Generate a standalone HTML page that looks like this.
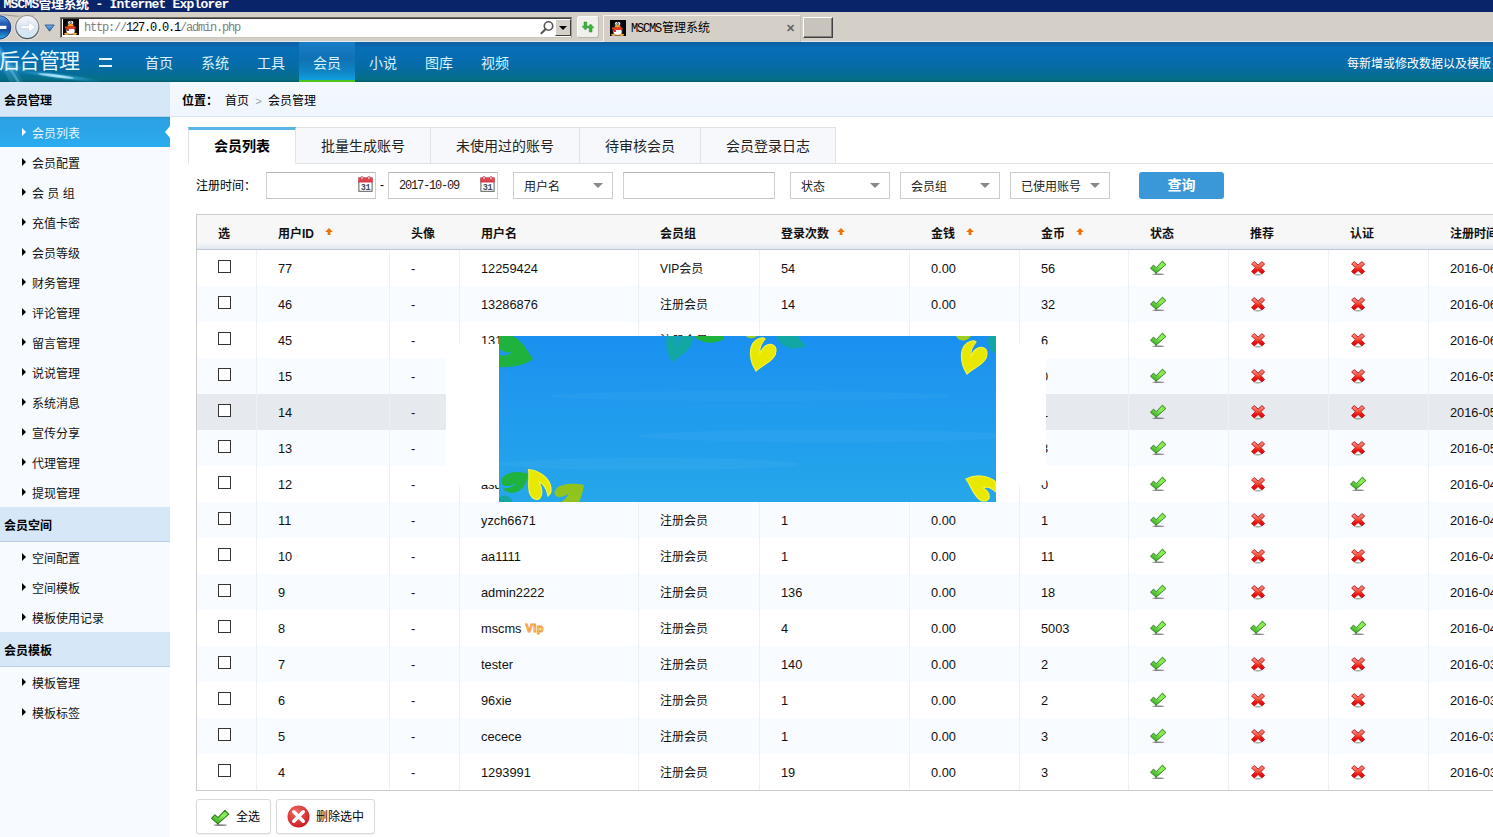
<!DOCTYPE html>
<html lang="zh-CN">
<head>
<meta charset="utf-8">
<title>MSCMS管理系统</title>
<style>
*{box-sizing:border-box;margin:0;padding:0}
html,body{width:1493px;height:837px;overflow:hidden;background:#fff}
body{position:relative;font-family:"Liberation Sans","Noto Sans CJK SC",sans-serif;font-size:12px;color:#000;line-height:1}
.abs{position:absolute}
/* ---------- browser chrome ---------- */
.titlebar{position:absolute;left:0;top:0;width:1493px;height:12px;background:#0a246a;overflow:hidden}
.titlebar span{position:absolute;left:3.5px;top:-3px;color:#fff;font:bold 13px/16px "Liberation Mono","Noto Sans CJK SC",monospace;white-space:nowrap;letter-spacing:-.5px}
.toolbar{position:absolute;left:0;top:12px;width:1493px;height:30px;background:#d4d0c8;border-bottom:1px solid #e4eaf0}
.addr{position:absolute;left:60px;top:5px;width:512px;height:21px;background:#fff;border:1px solid #716f64;border-right-color:#9d9a8f;border-bottom-color:#c9c6ba;box-shadow:inset 1px 1px 0 #404040}
.addr .url{position:absolute;left:23px;top:3px;font:12px/14px "Liberation Mono",monospace;color:#808080;white-space:nowrap;letter-spacing:-1.2px}
.addr .url b{font-weight:normal;color:#000}
.btab{position:absolute;left:603px;top:3px;width:198px;height:27px;background:#d4d0c8;border-left:1px solid #f4f3ef;border-top:1px solid #f4f3ef;border-right:1px solid #c4c0b8}
.btab .tt{position:absolute;left:27px;top:6px;font:12px/14px "Liberation Mono","Noto Sans CJK SC",monospace;white-space:nowrap;color:#000}
.btab .x{position:absolute;left:182px;top:5px;font:bold 11px/14px "Liberation Sans",sans-serif;color:#666}
.newtab{position:absolute;left:803px;top:5px;width:30px;height:21px;background:#c8c3bb;border:1px solid #fff;border-right-color:#404040;border-bottom-color:#404040;box-shadow:inset -1px -1px 0 #808080}
/* ---------- header ---------- */
.hdr{position:absolute;left:0;top:42px;width:1493px;height:40px;background:linear-gradient(#0e5fa2 0%,#0c63a8 6%,#066fb7 14%,#066cad 50%,#056c9b 75%,#057087 93%,#055c70 100%);overflow:hidden}
.logo{position:absolute;left:-1px;top:7px;font-size:21px;line-height:24px;color:#e4f6ff;font-weight:400;white-space:nowrap;letter-spacing:-1px}
.ham{position:absolute;left:99px;top:16px;width:13px;height:9px;border-top:2px solid #e6f6ff;border-bottom:2px solid #e6f6ff}
.nav{position:absolute;top:0;height:40px;width:56px;text-align:center;font-size:14px;line-height:43px;color:#d9f3ff}
.nav.on{background:linear-gradient(#1b7dc6 0%,#1072b4 45%,#0f86c6 80%,#10a0e0 100%);border-bottom:2px solid #4ec31c}
.notice{position:absolute;left:1347px;top:0;line-height:45px;font-size:12px;color:#fff;white-space:nowrap}
/* ---------- sidebar ---------- */
.side{position:absolute;left:0;top:82px;width:170px;height:755px;background:#f7fbff}
.sh{position:absolute;left:0;width:170px;height:35px;background:#d6e7f7;border-bottom:1px solid #b9cfe6;font-weight:bold;font-size:12px;line-height:38px;padding-left:4px;color:#000}
.si{position:absolute;left:0;width:170px;height:30px;font-size:12px;line-height:34px;padding-left:32px;color:#111}
.si:before{content:"";position:absolute;left:21.5px;top:10.5px;border-left:4.5px solid #000;border-top:4px solid transparent;border-bottom:4px solid transparent}
.si.on{background:linear-gradient(#2c94d4 0,#2ba2e4 8%,#2aa6e9 55%,#29adf0 100%);color:#e8f7ff}
.si.on:before{border-left-color:#fff}
.si.on:after{content:"";position:absolute;right:0;top:8.5px;border-right:5.5px solid #fff;border-top:6px solid transparent;border-bottom:6px solid transparent}
/* ---------- main ---------- */
.main{position:absolute;left:170px;top:82px;width:1323px;height:755px;background:#fff;overflow:hidden}
.crumb{position:absolute;left:0;top:0;width:1323px;height:35px;background:linear-gradient(#f4f9fe,#eff6fd);border-bottom:1px solid #dde5ec;font-size:12px;line-height:38px;padding-left:12px;white-space:nowrap}
.crumb b{font-weight:bold}
.crumb .c1{margin-left:7px}
.crumb .sep{display:inline-block;width:19px;text-align:center;color:#9aa;font-family:"Liberation Mono",monospace;font-size:11px}
.tabs{position:absolute;left:18px;top:45px;width:1305px;height:37px;border-bottom:1px solid #dfe3e8}
.tab{position:absolute;top:0;height:37px;border:1px solid #dfe3e8;border-left:none;background:#f6f8fb;font-size:14px;line-height:36px;text-align:center;color:#222}
.tab.on{background:#fff;border-top:3px solid #5ab3e6;border-left:1px solid #dfe3e8;border-bottom-color:#fff;font-weight:bold;line-height:32px;color:#000}
.filter{position:absolute;left:0;top:90px;width:1323px;height:27px;font-size:12px}
.filter .lbl{position:absolute;left:26px;top:0;line-height:28px}
.filter .dash{position:absolute;left:210px;top:0;line-height:26px}
.inp{position:absolute;top:0;height:27px;background:#fff;border:1px solid #cdd0d4;border-top-color:#b6b9bd;border-bottom-color:#c2c5c9}
.inp .cal{position:absolute;right:2px;top:3px}
.inp .dt{position:absolute;left:10px;top:0;line-height:26px;font-family:"Liberation Mono",monospace;font-size:12px;letter-spacing:-1.2px;color:#222}
.sel{position:absolute;top:0;height:27px;background:#fff;border:1px solid #c9cdd2;line-height:28px;padding-left:10px;color:#222}
.sel i{position:absolute;right:9px;top:10px;border-top:5px solid #888;border-left:5px solid transparent;border-right:5px solid transparent}
.btn-q{position:absolute;left:969px;top:0;width:85px;height:27px;border-radius:3px;background:#3a98d8;color:#fff;font-size:14px;font-weight:bold;line-height:26px;text-align:center}
/* table */
.tbl{position:absolute;left:26px;top:132px;width:1400px;height:577px;border:1px solid #ccc;border-right:none;background:#fff}
.th-row{position:absolute;left:0;top:0;width:1400px;height:35px;background:linear-gradient(#f7f7f7 0,#f7f7f7 78%,#eef2f6 88%,#e2e8ef 100%);border-bottom:1px solid #bfc8d2}
.th{position:absolute;top:0;height:34px;line-height:38px;font-weight:bold;padding-left:22px;white-space:nowrap;color:#111}
.th .up{margin-left:11px;vertical-align:2px}
.tr{position:absolute;left:0;width:1400px;height:36px;background:#fff}
.tr.alt{background:#f8fbff}
.tr.hov{background:#e6e9ee}
.td{position:absolute;top:0;height:36px;line-height:38px;padding-left:21px;border-left:1px solid #edf0f5;font-size:12.8px;white-space:nowrap;color:#111}
.td.c0{border-left:none}
.td.cg{font-size:12px}
.cb{position:absolute;left:22px;top:10px;width:13px;height:13px;border:1px solid #333;background:#fff}
.ic{position:absolute}
.vip{font:bold 11px "Liberation Sans",sans-serif;color:#fff;-webkit-text-stroke:1px #f29a2e;margin-left:4px;position:relative;top:-1px;letter-spacing:.5px}
.btn{position:absolute;top:717px;height:35px;border:1px solid #d9d9d9;border-radius:3px;background:#fff;font-size:12px;line-height:34px;box-shadow:0 1px 1px rgba(0,0,0,.06)}
.btn svg{position:absolute}
.btn span{position:absolute;white-space:nowrap}
.b1{left:26px;width:75px}
.b1 svg{left:14px;top:9px}
.b1 span{left:39px;top:0}
.b2{left:106px;width:99px}
.b2 svg{left:10px;top:5px}
.b2 span{left:39px;top:0}
/* overlay */
.wbox{position:absolute;left:276px;top:262px;width:600px;height:141px;background:#fff}
.pic{position:absolute;left:329px;top:254px;width:497px;height:166px}
.btab .tt i{font-style:normal;letter-spacing:-1.2px;margin-right:1px}
.titlebar span i{font-style:normal;letter-spacing:-.8px}

</style>
</head>
<body>
<svg width="0" height="0" style="position:absolute">
<defs>
<linearGradient id="g-ok" x1="1" y1="0" x2="0.2" y2="1"><stop offset="0" stop-color="#6fd63c"/><stop offset=".4" stop-color="#8ff05a"/><stop offset="1" stop-color="#2ea81c"/></linearGradient>
<linearGradient id="g-no" x1="0" y1="0" x2="0" y2="1"><stop offset="0" stop-color="#f89a96"/><stop offset=".5" stop-color="#f24a2e"/><stop offset=".7" stop-color="#ea1410"/><stop offset="1" stop-color="#d8000c"/></linearGradient>
<symbol id="i-ok" viewBox="0 0 17 16"><ellipse cx="8.4" cy="14.3" rx="6.2" ry="0.8" fill="#222" opacity=".55"/><rect x="5.4" y="12.6" width="1.6" height="1.6" fill="#445" opacity=".5"/><path d="M0.5 8.3 L3.5 5.1 L6.3 7.7 L12.4 1.1 L15.9 4.5 L6.1 13.2 Z" fill="url(#g-ok)" stroke="#2c7a1c" stroke-width=".9" stroke-linejoin="round"/></symbol>
<symbol id="i-no" viewBox="0 0 15 15"><ellipse cx="7.1" cy="13.8" rx="3.4" ry="0.7" fill="#363" opacity=".5"/><path d="M3.3 0.6 L7.1 4 L10.9 0.6 L13.6 2.9 L10 6.7 L13.6 10.5 L10.8 13 L7.1 9.5 L3.3 13 L0.6 10.5 L4.3 6.7 L0.6 2.9 Z" fill="url(#g-no)" stroke="#c0101a" stroke-width=".9" stroke-linejoin="round"/></symbol>
<symbol id="i-up" viewBox="0 0 8 8"><path d="M4 0 L7.8 4 L5.4 4 L5.4 7 L2.6 7 L2.6 4 L0.2 4 Z" fill="#f2700c"/></symbol>
<symbol id="i-cal" viewBox="0 0 16 16"><rect x="1.9" y="2" width="13.2" height="13.3" fill="#fff" stroke="#5c5c5c" stroke-width="1"/><rect x="1.4" y="1.6" width="14.2" height="4.6" fill="#e5434e"/><rect x="1.4" y="5.4" width="14.2" height="0.9" fill="#c8323c"/><rect x="4.1" y="0.2" width="1.9" height="3.2" rx=".9" fill="#fff" stroke="#c02c36" stroke-width=".7"/><rect x="11" y="0.2" width="1.9" height="3.2" rx=".9" fill="#fff" stroke="#c02c36" stroke-width=".7"/><text x="8.5" y="13.6" font-family="Liberation Mono,monospace" font-weight="bold" font-size="8.5" text-anchor="middle" fill="#3c4a5c" letter-spacing="-.3">31</text></symbol>
<radialGradient id="g-del" cx=".4" cy=".3" r=".8"><stop offset="0" stop-color="#f26a60"/><stop offset="1" stop-color="#c8141c"/></radialGradient>
<symbol id="i-del" viewBox="0 0 22 22"><circle cx="11" cy="11" r="10.5" fill="url(#g-del)"/><path d="M6.5 6.5 L15.5 15.5 M15.5 6.5 L6.5 15.5" stroke="#fff" stroke-width="3.4" stroke-linecap="round"/></symbol>
<symbol id="i-qq" viewBox="0 0 16 16"><rect x="0" y="0" width="16" height="16" fill="#0a0608"/><ellipse cx="7.6" cy="5" rx="4" ry="3.8" fill="#1c1a2c"/><ellipse cx="7.8" cy="11" rx="5.6" ry="4.8" fill="#241c1c"/><ellipse cx="7.6" cy="11.8" rx="4.2" ry="3.4" fill="#fff"/><ellipse cx="6.4" cy="3.6" rx="1.3" ry="1.5" fill="#fff"/><ellipse cx="8.9" cy="3.6" rx="1.3" ry="1.5" fill="#fff"/><circle cx="6.9" cy="3.8" r=".6" fill="#121"/><circle cx="8.4" cy="3.8" r=".6" fill="#121"/><ellipse cx="7.6" cy="6.2" rx="3" ry="1.3" fill="#f4a428"/><path d="M2 7.6 Q7.6 6.6 12.4 7.4 L12.6 9.4 Q7.6 10.6 5.6 9.8 L5.6 12 L4 12 L3.8 9.6 L2 9.4 Z" fill="#e2401c"/><path d="M4 10 h1.8 v2 h-1.8 z" fill="#d81c3c"/><ellipse cx="3.6" cy="14.8" rx="2.6" ry="1.1" fill="#f0a838"/><ellipse cx="11.6" cy="14.8" rx="2.6" ry="1.1" fill="#f0a838"/><rect x="2" y="14.4" width="11" height="1.2" fill="#e8b070" opacity=".7"/></symbol>
</defs>
</svg>

<div class="titlebar"><span><i>MSCMS</i>管理系统<i> - Internet Explorer</i></span></div>
<div class="toolbar">
<svg class="abs" style="left:0;top:0" width="60" height="30" viewBox="0 0 60 30">
<defs><linearGradient id="g-bk" x1="0" y1="0" x2="0" y2="1"><stop offset="0" stop-color="#6aa8e6"/><stop offset=".3" stop-color="#2a62b8"/><stop offset=".6" stop-color="#164aa0"/><stop offset="1" stop-color="#2cb0ea"/></linearGradient>
<linearGradient id="g-fw" x1="0" y1="0" x2="0" y2="1"><stop offset="0" stop-color="#f4f6fb"/><stop offset=".5" stop-color="#dfe6f2"/><stop offset="1" stop-color="#cfe6f4"/></linearGradient>
<linearGradient id="g-ring" x1="0" y1="0" x2="0" y2="1"><stop offset="0" stop-color="#a39c94"/><stop offset="1" stop-color="#4e5664"/></linearGradient>
<linearGradient id="g-dd" x1="0" y1="0" x2="0" y2="1"><stop offset="0" stop-color="#6db4f2"/><stop offset="1" stop-color="#2a6cc0"/></linearGradient></defs>
<path d="M-2 3.2 C6 1.6 14 4.6 20 4.2 C24 2.4 30 2.2 34 3.6" fill="none" stroke="#9a938a" stroke-width="1.2" opacity=".8"/>
<circle cx="27.3" cy="15.2" r="13.2" fill="#ece8e2" opacity=".7"/>
<circle cx="-1" cy="15.4" r="13" fill="#e8e4de" opacity=".7"/>
<circle cx="-1" cy="15.4" r="11.8" fill="url(#g-bk)" stroke="#153c80" stroke-width="1"/>
<path d="M-2 13.8 H6.4 V17 H-2 Z" fill="#fff"/>
<circle cx="27.3" cy="15" r="11.6" fill="url(#g-fw)" stroke="url(#g-ring)" stroke-width="1.2"/>
<path d="M21 13.6 H28.6 V9.6 L35.4 15.2 L28.6 20.8 V16.8 H21 Z" fill="#fff" stroke="#c4d0e0" stroke-width=".7" stroke-linejoin="round"/>
<path d="M45 13 H54.2 L49.6 19.2 Z" fill="url(#g-dd)" stroke="#1c4a86" stroke-width=".8" stroke-linejoin="round"/>
</svg>
<div class="addr">
<svg class="abs" style="left:2px;top:1px" width="16" height="16" viewBox="0 0 16 16"><use href="#i-qq"/></svg>
<span class="url">http://<b>127.0.0.1</b>/admin.php</span>
<svg class="abs" style="left:478px;top:2px" width="16" height="16" viewBox="0 0 16 16"><circle cx="9.5" cy="6" r="4.2" fill="none" stroke="#555" stroke-width="1.6"/><path d="M6.6 9 L2.5 13.2" stroke="#555" stroke-width="2" stroke-linecap="round"/></svg>
<div class="abs" style="left:494px;top:1px;width:16px;height:17px;background:#d4d0c8;border:1px solid #fff;border-right-color:#404040;border-bottom-color:#404040"><i class="abs" style="left:3px;top:6px;border-top:4px solid #000;border-left:4px solid transparent;border-right:4px solid transparent"></i></div>
</div>
<div class="abs" style="left:577px;top:4px;width:22px;height:22px;background:#f1f0ec;border:1px solid #fbfbfa;border-right-color:#b9b6ae;border-bottom-color:#b9b6ae;border-radius:3px">
<svg class="abs" style="left:2px;top:2px" width="16" height="16" viewBox="0 0 16 16"><path d="M5.4 3 L8.8 6.8 H6.8 V11 H4 V6.8 H2 Z" fill="#3cb43c" stroke="#2a8a2a" stroke-width=".5" transform="rotate(180 5.4 7)"/><path d="M10.6 5 L14 8.8 H12 V13 H9.2 V8.8 H7.2 Z" fill="#3cb43c" stroke="#2a8a2a" stroke-width=".5"/></svg>
</div>
<div class="btab">
<svg class="abs" style="left:6px;top:4px" width="16" height="16" viewBox="0 0 16 16"><use href="#i-qq"/></svg>
<span class="tt"><i>MSCMS</i>管理系统</span><span class="x">✕</span>
</div>
<div class="newtab"></div>
</div>

<div class="hdr">
<svg class="abs" style="left:0;top:0" width="200" height="40" viewBox="0 0 200 40">
<defs><radialGradient id="g-glow" cx=".5" cy=".5" r=".5"><stop offset="0" stop-color="#b8ecff" stop-opacity=".95"/><stop offset=".35" stop-color="#4cc0f4" stop-opacity=".55"/><stop offset="1" stop-color="#1a8fd0" stop-opacity="0"/></radialGradient>
<linearGradient id="g-beam" x1="0" y1="0" x2="1" y2="1"><stop offset="0" stop-color="#6cc8f8" stop-opacity=".7"/><stop offset="1" stop-color="#6cc8f8" stop-opacity=".15"/></linearGradient></defs>
<path d="M0 4 L24 40 L10 40 L0 22 Z" fill="url(#g-beam)" opacity=".55"/>
<path d="M0 8 L20 40 L17 40 L0 12 Z" fill="#9fe0ff" opacity=".35"/>
<ellipse cx="14" cy="26" rx="26" ry="10" fill="url(#g-glow)" opacity=".35"/>
<ellipse cx="58" cy="34" rx="46" ry="3.4" fill="url(#g-glow)" transform="rotate(7 58 34)"/>
<ellipse cx="56" cy="34" rx="18" ry="1.6" fill="#c8f2ff" opacity=".6" transform="rotate(7 56 34)"/>
</svg>
<div class="logo">后台管理</div>
<div class="ham"></div>
<div class="nav" style="left:131px">首页</div>
<div class="nav" style="left:187px">系统</div>
<div class="nav" style="left:243px">工具</div>
<div class="nav on" style="left:299px">会员</div>
<div class="nav" style="left:355px">小说</div>
<div class="nav" style="left:411px">图库</div>
<div class="nav" style="left:467px">视频</div>
<div class="notice">每新增或修改数据以及模版，</div>
</div>

<div class="side">
<div class="sh" style="top:0px">会员管理</div>
<div class="si on" style="top:35px">会员列表</div>
<div class="si" style="top:65px">会员配置</div>
<div class="si" style="top:95px">会 员 组</div>
<div class="si" style="top:125px">充值卡密</div>
<div class="si" style="top:155px">会员等级</div>
<div class="si" style="top:185px">财务管理</div>
<div class="si" style="top:215px">评论管理</div>
<div class="si" style="top:245px">留言管理</div>
<div class="si" style="top:275px">说说管理</div>
<div class="si" style="top:305px">系统消息</div>
<div class="si" style="top:335px">宣传分享</div>
<div class="si" style="top:365px">代理管理</div>
<div class="si" style="top:395px">提现管理</div>
<div class="sh" style="top:425px">会员空间</div>
<div class="si" style="top:460px">空间配置</div>
<div class="si" style="top:490px">空间模板</div>
<div class="si" style="top:520px">模板使用记录</div>
<div class="sh" style="top:550px">会员模板</div>
<div class="si" style="top:585px">模板管理</div>
<div class="si" style="top:615px">模板标签</div>
</div>
<div class="main">
<div class="crumb"><b>位置：</b><span class="c1">首页</span><span class="sep">&gt;</span><span class="c2">会员管理</span></div>
<div class="tabs">
<div class="tab on" style="left:0px;width:108px">会员列表</div>
<div class="tab" style="left:108px;width:135px">批量生成账号</div>
<div class="tab" style="left:243px;width:149px">未使用过的账号</div>
<div class="tab" style="left:392px;width:121px">待审核会员</div>
<div class="tab" style="left:513px;width:135px">会员登录日志</div>
</div>
<div class="filter">
<span class="lbl">注册时间：</span>
<div class="inp" style="left:96px;width:110px"><svg class="cal" width="16" height="16" viewBox="0 0 16 16"><use href="#i-cal"/></svg></div>
<span class="dash">-</span>
<div class="inp" style="left:218px;width:110px"><span class="dt">2017-10-09</span><svg class="cal" width="16" height="16" viewBox="0 0 16 16"><use href="#i-cal"/></svg></div>
<div class="sel" style="left:343px;width:100px">用户名<i></i></div>
<div class="inp" style="left:453px;width:152px"></div>
<div class="sel" style="left:620px;width:100px">状态<i></i></div>
<div class="sel" style="left:730px;width:100px">会员组<i></i></div>
<div class="sel" style="left:840px;width:100px">已使用账号<i></i></div>
<div class="btn-q">查询</div>
</div>
<div class="tbl">
<div class="th-row">
<div class="th" style="left:-1px;width:60px">选</div>
<div class="th" style="left:59px;width:133px">用户ID<svg class="up" width="8" height="8" viewBox="0 0 8 8"><use href="#i-up"/></svg></div>
<div class="th" style="left:192px;width:70px">头像</div>
<div class="th" style="left:262px;width:179px">用户名</div>
<div class="th" style="left:441px;width:121px">会员组</div>
<div class="th" style="left:562px;width:150px">登录次数<svg class="up" style="margin-left:8px" width="8" height="8" viewBox="0 0 8 8"><use href="#i-up"/></svg></div>
<div class="th" style="left:712px;width:110px">金钱<svg class="up" width="8" height="8" viewBox="0 0 8 8"><use href="#i-up"/></svg></div>
<div class="th" style="left:822px;width:109px">金币<svg class="up" width="8" height="8" viewBox="0 0 8 8"><use href="#i-up"/></svg></div>
<div class="th" style="left:931px;width:100px">状态</div>
<div class="th" style="left:1031px;width:100px">推荐</div>
<div class="th" style="left:1131px;width:100px">认证</div>
<div class="th" style="left:1231px;width:172px">注册时间<svg class="up" width="8" height="8" viewBox="0 0 8 8"><use href="#i-up"/></svg></div>
</div>
<div class="tr" style="top:35px">
<div class="td c0" style="left:-1px;width:60px"><span class="cb"></span></div>
<div class="td" style="left:59px;width:133px">77</div>
<div class="td" style="left:192px;width:70px">-</div>
<div class="td" style="left:262px;width:179px">12259424</div>
<div class="td cg" style="left:441px;width:121px">VIP会员</div>
<div class="td" style="left:562px;width:150px">54</div>
<div class="td" style="left:712px;width:110px">0.00</div>
<div class="td" style="left:822px;width:109px">56</div>
<div class="td" style="left:931px;width:100px"><svg class="ic" style="left:21px;top:10px" width="17" height="16" viewBox="0 0 17 16"><use href="#i-ok"/></svg></div>
<div class="td" style="left:1031px;width:100px"><svg class="ic" style="left:22px;top:11px" width="15" height="15" viewBox="0 0 15 15"><use href="#i-no"/></svg></div>
<div class="td" style="left:1131px;width:100px"><svg class="ic" style="left:22px;top:11px" width="15" height="15" viewBox="0 0 15 15"><use href="#i-no"/></svg></div>
<div class="td" style="left:1231px;width:172px">2016-06</div>
</div>
<div class="tr alt" style="top:71px">
<div class="td c0" style="left:-1px;width:60px"><span class="cb"></span></div>
<div class="td" style="left:59px;width:133px">46</div>
<div class="td" style="left:192px;width:70px">-</div>
<div class="td" style="left:262px;width:179px">13286876</div>
<div class="td cg" style="left:441px;width:121px">注册会员</div>
<div class="td" style="left:562px;width:150px">14</div>
<div class="td" style="left:712px;width:110px">0.00</div>
<div class="td" style="left:822px;width:109px">32</div>
<div class="td" style="left:931px;width:100px"><svg class="ic" style="left:21px;top:10px" width="17" height="16" viewBox="0 0 17 16"><use href="#i-ok"/></svg></div>
<div class="td" style="left:1031px;width:100px"><svg class="ic" style="left:22px;top:11px" width="15" height="15" viewBox="0 0 15 15"><use href="#i-no"/></svg></div>
<div class="td" style="left:1131px;width:100px"><svg class="ic" style="left:22px;top:11px" width="15" height="15" viewBox="0 0 15 15"><use href="#i-no"/></svg></div>
<div class="td" style="left:1231px;width:172px">2016-06</div>
</div>
<div class="tr" style="top:107px">
<div class="td c0" style="left:-1px;width:60px"><span class="cb"></span></div>
<div class="td" style="left:59px;width:133px">45</div>
<div class="td" style="left:192px;width:70px">-</div>
<div class="td" style="left:262px;width:179px">131</div>
<div class="td cg" style="left:441px;width:121px">注册会员</div>
<div class="td" style="left:562px;width:150px">1</div>
<div class="td" style="left:712px;width:110px">0.00</div>
<div class="td" style="left:822px;width:109px">6</div>
<div class="td" style="left:931px;width:100px"><svg class="ic" style="left:21px;top:10px" width="17" height="16" viewBox="0 0 17 16"><use href="#i-ok"/></svg></div>
<div class="td" style="left:1031px;width:100px"><svg class="ic" style="left:22px;top:11px" width="15" height="15" viewBox="0 0 15 15"><use href="#i-no"/></svg></div>
<div class="td" style="left:1131px;width:100px"><svg class="ic" style="left:22px;top:11px" width="15" height="15" viewBox="0 0 15 15"><use href="#i-no"/></svg></div>
<div class="td" style="left:1231px;width:172px">2016-06</div>
</div>
<div class="tr alt" style="top:143px">
<div class="td c0" style="left:-1px;width:60px"><span class="cb"></span></div>
<div class="td" style="left:59px;width:133px">15</div>
<div class="td" style="left:192px;width:70px">-</div>
<div class="td" style="left:262px;width:179px"></div>
<div class="td cg" style="left:441px;width:121px"></div>
<div class="td" style="left:562px;width:150px"></div>
<div class="td" style="left:712px;width:110px"></div>
<div class="td" style="left:822px;width:109px">0</div>
<div class="td" style="left:931px;width:100px"><svg class="ic" style="left:21px;top:10px" width="17" height="16" viewBox="0 0 17 16"><use href="#i-ok"/></svg></div>
<div class="td" style="left:1031px;width:100px"><svg class="ic" style="left:22px;top:11px" width="15" height="15" viewBox="0 0 15 15"><use href="#i-no"/></svg></div>
<div class="td" style="left:1131px;width:100px"><svg class="ic" style="left:22px;top:11px" width="15" height="15" viewBox="0 0 15 15"><use href="#i-no"/></svg></div>
<div class="td" style="left:1231px;width:172px">2016-05</div>
</div>
<div class="tr hov" style="top:179px">
<div class="td c0" style="left:-1px;width:60px"><span class="cb"></span></div>
<div class="td" style="left:59px;width:133px">14</div>
<div class="td" style="left:192px;width:70px">-</div>
<div class="td" style="left:262px;width:179px"></div>
<div class="td cg" style="left:441px;width:121px"></div>
<div class="td" style="left:562px;width:150px"></div>
<div class="td" style="left:712px;width:110px"></div>
<div class="td" style="left:822px;width:109px">1</div>
<div class="td" style="left:931px;width:100px"><svg class="ic" style="left:21px;top:10px" width="17" height="16" viewBox="0 0 17 16"><use href="#i-ok"/></svg></div>
<div class="td" style="left:1031px;width:100px"><svg class="ic" style="left:22px;top:11px" width="15" height="15" viewBox="0 0 15 15"><use href="#i-no"/></svg></div>
<div class="td" style="left:1131px;width:100px"><svg class="ic" style="left:22px;top:11px" width="15" height="15" viewBox="0 0 15 15"><use href="#i-no"/></svg></div>
<div class="td" style="left:1231px;width:172px">2016-05</div>
</div>
<div class="tr alt" style="top:215px">
<div class="td c0" style="left:-1px;width:60px"><span class="cb"></span></div>
<div class="td" style="left:59px;width:133px">13</div>
<div class="td" style="left:192px;width:70px">-</div>
<div class="td" style="left:262px;width:179px"></div>
<div class="td cg" style="left:441px;width:121px"></div>
<div class="td" style="left:562px;width:150px"></div>
<div class="td" style="left:712px;width:110px"></div>
<div class="td" style="left:822px;width:109px">3</div>
<div class="td" style="left:931px;width:100px"><svg class="ic" style="left:21px;top:10px" width="17" height="16" viewBox="0 0 17 16"><use href="#i-ok"/></svg></div>
<div class="td" style="left:1031px;width:100px"><svg class="ic" style="left:22px;top:11px" width="15" height="15" viewBox="0 0 15 15"><use href="#i-no"/></svg></div>
<div class="td" style="left:1131px;width:100px"><svg class="ic" style="left:22px;top:11px" width="15" height="15" viewBox="0 0 15 15"><use href="#i-no"/></svg></div>
<div class="td" style="left:1231px;width:172px">2016-05</div>
</div>
<div class="tr" style="top:251px">
<div class="td c0" style="left:-1px;width:60px"><span class="cb"></span></div>
<div class="td" style="left:59px;width:133px">12</div>
<div class="td" style="left:192px;width:70px">-</div>
<div class="td" style="left:262px;width:179px">asd</div>
<div class="td cg" style="left:441px;width:121px"></div>
<div class="td" style="left:562px;width:150px"></div>
<div class="td" style="left:712px;width:110px"></div>
<div class="td" style="left:822px;width:109px">0</div>
<div class="td" style="left:931px;width:100px"><svg class="ic" style="left:21px;top:10px" width="17" height="16" viewBox="0 0 17 16"><use href="#i-ok"/></svg></div>
<div class="td" style="left:1031px;width:100px"><svg class="ic" style="left:22px;top:11px" width="15" height="15" viewBox="0 0 15 15"><use href="#i-no"/></svg></div>
<div class="td" style="left:1131px;width:100px"><svg class="ic" style="left:21px;top:10px" width="17" height="16" viewBox="0 0 17 16"><use href="#i-ok"/></svg></div>
<div class="td" style="left:1231px;width:172px">2016-04</div>
</div>
<div class="tr alt" style="top:287px">
<div class="td c0" style="left:-1px;width:60px"><span class="cb"></span></div>
<div class="td" style="left:59px;width:133px">11</div>
<div class="td" style="left:192px;width:70px">-</div>
<div class="td" style="left:262px;width:179px">yzch6671</div>
<div class="td cg" style="left:441px;width:121px">注册会员</div>
<div class="td" style="left:562px;width:150px">1</div>
<div class="td" style="left:712px;width:110px">0.00</div>
<div class="td" style="left:822px;width:109px">1</div>
<div class="td" style="left:931px;width:100px"><svg class="ic" style="left:21px;top:10px" width="17" height="16" viewBox="0 0 17 16"><use href="#i-ok"/></svg></div>
<div class="td" style="left:1031px;width:100px"><svg class="ic" style="left:22px;top:11px" width="15" height="15" viewBox="0 0 15 15"><use href="#i-no"/></svg></div>
<div class="td" style="left:1131px;width:100px"><svg class="ic" style="left:22px;top:11px" width="15" height="15" viewBox="0 0 15 15"><use href="#i-no"/></svg></div>
<div class="td" style="left:1231px;width:172px">2016-04</div>
</div>
<div class="tr" style="top:323px">
<div class="td c0" style="left:-1px;width:60px"><span class="cb"></span></div>
<div class="td" style="left:59px;width:133px">10</div>
<div class="td" style="left:192px;width:70px">-</div>
<div class="td" style="left:262px;width:179px">aa1111</div>
<div class="td cg" style="left:441px;width:121px">注册会员</div>
<div class="td" style="left:562px;width:150px">1</div>
<div class="td" style="left:712px;width:110px">0.00</div>
<div class="td" style="left:822px;width:109px">11</div>
<div class="td" style="left:931px;width:100px"><svg class="ic" style="left:21px;top:10px" width="17" height="16" viewBox="0 0 17 16"><use href="#i-ok"/></svg></div>
<div class="td" style="left:1031px;width:100px"><svg class="ic" style="left:22px;top:11px" width="15" height="15" viewBox="0 0 15 15"><use href="#i-no"/></svg></div>
<div class="td" style="left:1131px;width:100px"><svg class="ic" style="left:22px;top:11px" width="15" height="15" viewBox="0 0 15 15"><use href="#i-no"/></svg></div>
<div class="td" style="left:1231px;width:172px">2016-04</div>
</div>
<div class="tr alt" style="top:359px">
<div class="td c0" style="left:-1px;width:60px"><span class="cb"></span></div>
<div class="td" style="left:59px;width:133px">9</div>
<div class="td" style="left:192px;width:70px">-</div>
<div class="td" style="left:262px;width:179px">admin2222</div>
<div class="td cg" style="left:441px;width:121px">注册会员</div>
<div class="td" style="left:562px;width:150px">136</div>
<div class="td" style="left:712px;width:110px">0.00</div>
<div class="td" style="left:822px;width:109px">18</div>
<div class="td" style="left:931px;width:100px"><svg class="ic" style="left:21px;top:10px" width="17" height="16" viewBox="0 0 17 16"><use href="#i-ok"/></svg></div>
<div class="td" style="left:1031px;width:100px"><svg class="ic" style="left:22px;top:11px" width="15" height="15" viewBox="0 0 15 15"><use href="#i-no"/></svg></div>
<div class="td" style="left:1131px;width:100px"><svg class="ic" style="left:22px;top:11px" width="15" height="15" viewBox="0 0 15 15"><use href="#i-no"/></svg></div>
<div class="td" style="left:1231px;width:172px">2016-04</div>
</div>
<div class="tr" style="top:395px">
<div class="td c0" style="left:-1px;width:60px"><span class="cb"></span></div>
<div class="td" style="left:59px;width:133px">8</div>
<div class="td" style="left:192px;width:70px">-</div>
<div class="td" style="left:262px;width:179px">mscms<span class="vip">Vip</span></div>
<div class="td cg" style="left:441px;width:121px">注册会员</div>
<div class="td" style="left:562px;width:150px">4</div>
<div class="td" style="left:712px;width:110px">0.00</div>
<div class="td" style="left:822px;width:109px">5003</div>
<div class="td" style="left:931px;width:100px"><svg class="ic" style="left:21px;top:10px" width="17" height="16" viewBox="0 0 17 16"><use href="#i-ok"/></svg></div>
<div class="td" style="left:1031px;width:100px"><svg class="ic" style="left:21px;top:10px" width="17" height="16" viewBox="0 0 17 16"><use href="#i-ok"/></svg></div>
<div class="td" style="left:1131px;width:100px"><svg class="ic" style="left:21px;top:10px" width="17" height="16" viewBox="0 0 17 16"><use href="#i-ok"/></svg></div>
<div class="td" style="left:1231px;width:172px">2016-04</div>
</div>
<div class="tr alt" style="top:431px">
<div class="td c0" style="left:-1px;width:60px"><span class="cb"></span></div>
<div class="td" style="left:59px;width:133px">7</div>
<div class="td" style="left:192px;width:70px">-</div>
<div class="td" style="left:262px;width:179px">tester</div>
<div class="td cg" style="left:441px;width:121px">注册会员</div>
<div class="td" style="left:562px;width:150px">140</div>
<div class="td" style="left:712px;width:110px">0.00</div>
<div class="td" style="left:822px;width:109px">2</div>
<div class="td" style="left:931px;width:100px"><svg class="ic" style="left:21px;top:10px" width="17" height="16" viewBox="0 0 17 16"><use href="#i-ok"/></svg></div>
<div class="td" style="left:1031px;width:100px"><svg class="ic" style="left:22px;top:11px" width="15" height="15" viewBox="0 0 15 15"><use href="#i-no"/></svg></div>
<div class="td" style="left:1131px;width:100px"><svg class="ic" style="left:22px;top:11px" width="15" height="15" viewBox="0 0 15 15"><use href="#i-no"/></svg></div>
<div class="td" style="left:1231px;width:172px">2016-03</div>
</div>
<div class="tr" style="top:467px">
<div class="td c0" style="left:-1px;width:60px"><span class="cb"></span></div>
<div class="td" style="left:59px;width:133px">6</div>
<div class="td" style="left:192px;width:70px">-</div>
<div class="td" style="left:262px;width:179px">96xie</div>
<div class="td cg" style="left:441px;width:121px">注册会员</div>
<div class="td" style="left:562px;width:150px">1</div>
<div class="td" style="left:712px;width:110px">0.00</div>
<div class="td" style="left:822px;width:109px">2</div>
<div class="td" style="left:931px;width:100px"><svg class="ic" style="left:21px;top:10px" width="17" height="16" viewBox="0 0 17 16"><use href="#i-ok"/></svg></div>
<div class="td" style="left:1031px;width:100px"><svg class="ic" style="left:22px;top:11px" width="15" height="15" viewBox="0 0 15 15"><use href="#i-no"/></svg></div>
<div class="td" style="left:1131px;width:100px"><svg class="ic" style="left:22px;top:11px" width="15" height="15" viewBox="0 0 15 15"><use href="#i-no"/></svg></div>
<div class="td" style="left:1231px;width:172px">2016-03</div>
</div>
<div class="tr alt" style="top:503px">
<div class="td c0" style="left:-1px;width:60px"><span class="cb"></span></div>
<div class="td" style="left:59px;width:133px">5</div>
<div class="td" style="left:192px;width:70px">-</div>
<div class="td" style="left:262px;width:179px">cecece</div>
<div class="td cg" style="left:441px;width:121px">注册会员</div>
<div class="td" style="left:562px;width:150px">1</div>
<div class="td" style="left:712px;width:110px">0.00</div>
<div class="td" style="left:822px;width:109px">3</div>
<div class="td" style="left:931px;width:100px"><svg class="ic" style="left:21px;top:10px" width="17" height="16" viewBox="0 0 17 16"><use href="#i-ok"/></svg></div>
<div class="td" style="left:1031px;width:100px"><svg class="ic" style="left:22px;top:11px" width="15" height="15" viewBox="0 0 15 15"><use href="#i-no"/></svg></div>
<div class="td" style="left:1131px;width:100px"><svg class="ic" style="left:22px;top:11px" width="15" height="15" viewBox="0 0 15 15"><use href="#i-no"/></svg></div>
<div class="td" style="left:1231px;width:172px">2016-03</div>
</div>
<div class="tr" style="top:539px">
<div class="td c0" style="left:-1px;width:60px"><span class="cb"></span></div>
<div class="td" style="left:59px;width:133px">4</div>
<div class="td" style="left:192px;width:70px">-</div>
<div class="td" style="left:262px;width:179px">1293991</div>
<div class="td cg" style="left:441px;width:121px">注册会员</div>
<div class="td" style="left:562px;width:150px">19</div>
<div class="td" style="left:712px;width:110px">0.00</div>
<div class="td" style="left:822px;width:109px">3</div>
<div class="td" style="left:931px;width:100px"><svg class="ic" style="left:21px;top:10px" width="17" height="16" viewBox="0 0 17 16"><use href="#i-ok"/></svg></div>
<div class="td" style="left:1031px;width:100px"><svg class="ic" style="left:22px;top:11px" width="15" height="15" viewBox="0 0 15 15"><use href="#i-no"/></svg></div>
<div class="td" style="left:1131px;width:100px"><svg class="ic" style="left:22px;top:11px" width="15" height="15" viewBox="0 0 15 15"><use href="#i-no"/></svg></div>
<div class="td" style="left:1231px;width:172px">2016-03</div>
</div>
</div>
<div class="btn b1"><svg width="19" height="18" viewBox="0 0 17 16"><use href="#i-ok"/></svg><span>全选</span></div>
<div class="btn b2"><svg width="23" height="23" viewBox="0 0 22 22"><use href="#i-del"/></svg><span>删除选中</span></div>
<div class="wbox"></div>
<svg class="pic" width="497" height="166" viewBox="0 0 497 166">
<defs><linearGradient id="g-sky" x1="0" y1="0" x2="0" y2="1"><stop offset="0" stop-color="#1990f0"/><stop offset=".35" stop-color="#1f99ee"/><stop offset=".7" stop-color="#22a0ec"/><stop offset="1" stop-color="#26a7ea"/></linearGradient>
<path id="heart" d="M6 33 C-1 22 -1 10 4 4 C7 0 13 -1 15 1 C11 6 9 10 10 15 C13 8 19 5 23 7 C27 9 27 15 23 20 C19 25 11 28 6 33 Z"/></defs>
<rect width="497" height="166" fill="url(#g-sky)"/>
<ellipse cx="250" cy="60" rx="200" ry="5" fill="#fff" opacity=".035"/>
<ellipse cx="330" cy="100" rx="190" ry="6" fill="#fff" opacity=".04"/>
<ellipse cx="150" cy="128" rx="150" ry="6" fill="#fff" opacity=".04"/>
<path d="M0 0 L13 0 C22 3 27 13 34 23 C28 28 14 32 0 31 Z" fill="#1fb23c"/>
<path d="M0 13 C4 16 8 17 13 16 C9 19.5 4 20 0 19 Z" fill="#1f96ee"/>
<path d="M168 0 C166 10 168 18 173 26 C182 20 192 14 194 4 C194 2 193 0 192 0 Z" fill="#12a6a4"/>
<path d="M178 0 C176 4 176 8 178 11 C179 6 181 3 183 0 Z" fill="#1c98dc" opacity=".6"/>
<path d="M195 0 C200 6 212 10 225 3 L224 0 Z" fill="#1fb23c"/>
<path d="M247 0 C249 3 255 3 258 0 Z" fill="#9ccf20"/>
<use href="#heart" x="251" y="2" fill="#e8e800" stroke="#f4f43c" stroke-width="1.2"/>
<path d="M277 0 C280 8 290 17 307 10 C303 6 300 2 298 0 Z" fill="#12a6a4"/>
<path d="M457 0 C460 6 468 6 472 0 Z" fill="#9ccf20"/>
<use href="#heart" x="462" y="5" fill="#e8e800" stroke="#f4f43c" stroke-width="1.2"/>
<path d="M497 0 L490 0 C487 6 490 14 497 19 Z" fill="#12a6a4"/>
<path d="M29.5 138 C22 135 10 135 4 141 C1 145 2 149 6 150 C10 150.5 14 149 17 147 C14 151 9 153 4 152 C6 157 14 158 20 155 C26 151 28 144 29.5 138 Z" fill="#1fb23c"/>
<path d="M29.5 133.5 C38 134 48 140 51 148 C53 154 52 158 49 160 C48 154 45 148 40 146 C43 152 44 158 41 162 C38 165 33 163 31 158 C28 150 31 142 29.5 133.5 Z" fill="#e8e800" stroke="#f4f43c" stroke-width="1.2"/>
<path d="M85 149 C76 147 62 147 57 153 C54 157 56 161 60 161 C64 161 68 159 70 157 C68 161 66 164 62 166 L80 166 C83 160 84 154 85 149 Z" fill="#90c41c"/>
<circle cx="6" cy="167" r="7.5" fill="#12a6a4"/>
<path d="M467 143 C475 139 488 138 497 146 L497 156 C493 152 488 150 484 152 C488 154 491 158 490 162 C488 166 483 166 480 163 C474 158 472 150 467 143 Z" fill="#e8e800" stroke="#f4f43c" stroke-width="1.2"/>
</svg>

</div>
</body>
</html>
